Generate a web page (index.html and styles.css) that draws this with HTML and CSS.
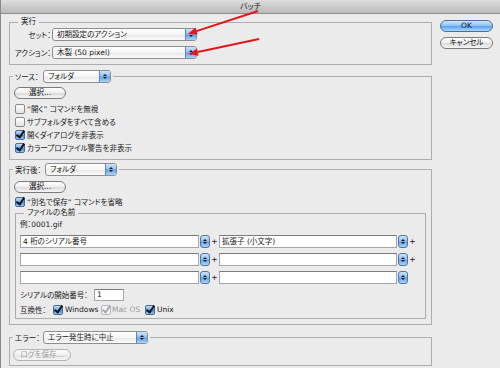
FILE: index.html
```html
<!DOCTYPE html>
<html lang="ja">
<head>
    <meta charset="UTF-8">
    <meta name="viewport" content="width=device-width, initial-scale=1.0">
    <title>バッチ</title>
    <link rel="stylesheet" href="styles.css">
</head>
<body>
    <div class="window">
        <div class="titlebar">バッチ</div>
        <div class="content">
            <div class="main">
                <fieldset class="group group-run">
                    <legend class="group-title">実行</legend>
                    <div class="run-rows">
                        <div class="form-row">
                            <span class="row-label">セット：</span>
                            <div class="popup popup-set"><span class="popup-text">初期設定のアクション</span><span class="popup-arrow"></span></div>
                        </div>
                        <div class="form-row">
                            <span class="row-label">アクション：</span>
                            <div class="popup popup-set"><span class="popup-text">木製 (50 pixel)</span><span class="popup-arrow"></span></div>
                        </div>
                    </div>
                </fieldset>

                <fieldset class="group group-source">
                    <legend class="group-head">
                        <span class="head-label">ソース：</span>
                        <div class="popup popup-source"><span class="popup-text">フォルダ</span><span class="popup-arrow"></span></div>
                    </legend>
                    <button class="aqua-btn choose-btn">選択...</button>
                    <div class="check-list">
                        <label class="check"><span class="box"></span>“開く” コマンドを無視</label>
                        <label class="check"><span class="box"></span>サブフォルダをすべて含める</label>
                        <label class="check"><span class="box on"></span>開くダイアログを非表示</label>
                        <label class="check"><span class="box on"></span>カラープロファイル警告を非表示</label>
                    </div>
                </fieldset>

                <fieldset class="group group-dest">
                    <legend class="group-head">
                        <span class="head-label label-dest">実行後：</span>
                        <div class="popup popup-dest"><span class="popup-text">フォルダ</span><span class="popup-arrow"></span></div>
                    </legend>
                    <button class="aqua-btn choose-btn">選択...</button>
                    <div class="check-list check-saveas">
                        <label class="check"><span class="box on"></span>“別名で保存” コマンドを省略</label>
                    </div>

                    <fieldset class="group group-name">
                        <legend class="group-title">ファイルの名前</legend>
                        <div class="example">例：0001.gif</div>
                        <div class="combo-rows">
                            <div class="combo-row">
                                <div class="field field-a">4 桁のシリアル番号</div><span class="combo-btn"></span><span class="plus">+</span>
                                <div class="field field-b">拡張子 (小文字)</div><span class="combo-btn"></span><span class="plus">+</span>
                            </div>
                            <div class="combo-row">
                                <div class="field field-a"></div><span class="combo-btn"></span><span class="plus">+</span>
                                <div class="field field-b"></div><span class="combo-btn"></span><span class="plus">+</span>
                            </div>
                            <div class="combo-row">
                                <div class="field field-a"></div><span class="combo-btn"></span><span class="plus">+</span>
                                <div class="field field-b"></div><span class="combo-btn"></span>
                            </div>
                        </div>
                        <div class="serial-row">
                            <span class="serial-label">シリアルの開始番号：</span>
                            <div class="field field-serial">1</div>
                        </div>
                        <div class="compat-row">
                            <span class="compat-label">互換性：</span>
                            <label class="check check-win"><span class="box on"></span>Windows</label>
                            <label class="check check-mac check-dim"><span class="box dim"></span>Mac OS</label>
                            <label class="check"><span class="box on"></span>Unix</label>
                        </div>
                    </fieldset>
                </fieldset>

                <fieldset class="group group-error">
                    <legend class="group-head">
                        <span class="head-label">エラー：</span>
                        <div class="popup popup-error"><span class="popup-text">エラー発生時に中止</span><span class="popup-arrow"></span></div>
                    </legend>
                    <button class="aqua-btn log-btn" disabled>ログを保存...</button>
                </fieldset>
            </div>

            <div class="side">
                <button class="aqua-btn default-btn">OK</button>
                <button class="aqua-btn">キャンセル</button>
            </div>
        </div>
    </div>

    <svg class="annotations" width="500" height="372" viewBox="0 0 500 372">
        <line x1="258" y1="11" x2="196.5" y2="31.1" stroke="#e4161b" stroke-width="2"/>
        <polygon points="188,34 197.6,34.6 195.4,27.6" fill="#e4161b"/>
        <line x1="259" y1="39" x2="197.8" y2="52.1" stroke="#e4161b" stroke-width="2"/>
        <polygon points="189,54 198.6,55.7 197,48.5" fill="#e4161b"/>
    </svg>
</body>
</html>
```

FILE: styles.css
```css
body {
    margin: 0;
    background: #ffffff;
    font-family: "DejaVu Sans", "Noto Sans CJK JP", sans-serif;
    font-size: 7.5px;
    font-feature-settings: "palt";
    color: #1a1a1a;
    position: relative;
}
.window {
    width: 500px;
    height: 368px;
    box-sizing: border-box;
    background: #ebebeb;
    border-left: 1px solid #8a8a8a;
    box-shadow: 0 2px 3px rgba(0,0,0,0.45);
}
.titlebar {
    height: 13px;
    line-height: 13px;
    text-align: center;
    font-size: 8px;
    color: #222;
    background: linear-gradient(#dedede, #bababa);
    border-bottom: 1px solid #8c8c8c;
}
.content {
    display: flex;
    gap: 8px;
    padding: 3px 0 0 8px;
}
.main {
    width: 423px;
}
.side {
    width: 53px;
    display: flex;
    flex-direction: column;
    gap: 5px;
    padding-top: 3px;
}

/* group boxes */
.group {
    margin: 0;
    padding: 0 0 5px;
    border: 1px solid #adadad;
    min-inline-size: 0;
}
.group-title {
    margin-left: 8px;
    padding: 0 3px;
    height: 10px;
    line-height: 10px;
}
.group-head {
    display: flex;
    align-items: center;
    height: 13px;
    margin-left: 3px;
    padding: 0 2px;
}
.head-label {
    width: 28px;
    white-space: nowrap;
}
.label-dest {
    width: 30px;
}
.group-source {
    margin-top: 5px;
}
.group-dest {
    margin-top: 3px;
}
.group-error {
    margin-top: 6px;
    padding-bottom: 4px;
}

/* run group */
.run-rows {
    display: flex;
    flex-direction: column;
    gap: 5px;
    padding-top: 1px;
}
.form-row {
    display: flex;
    align-items: center;
    height: 13px;
}
.row-label {
    width: 42px;
    box-sizing: border-box;
    padding-right: 1px;
    text-align: right;
    white-space: nowrap;
}

/* popup menus */
.popup {
    display: flex;
    height: 13px;
    box-sizing: border-box;
    border: 1px solid #8e8e8e;
    border-radius: 3px;
    background: linear-gradient(#ffffff, #f4f4f4 50%, #e8e8e8 51%, #fbfbfb);
}
.popup-text {
    flex: 1;
    padding-left: 4px;
    line-height: 11px;
    white-space: nowrap;
}
.popup-arrow,
.combo-btn {
    display: flex;
    flex-direction: column;
    align-items: center;
    justify-content: center;
    gap: 1px;
    background: linear-gradient(#cde3fb, #8ec0f3 48%, #5c9fe9 52%, #a9d4fb);
}
.popup-arrow {
    width: 10px;
    border-left: 1px solid #5f86b8;
    border-radius: 0 2px 2px 0;
}
.popup-arrow::before,
.combo-btn::before {
    content: "";
    border-left: 2px solid transparent;
    border-right: 2px solid transparent;
    border-bottom: 2px solid #1c1c1c;
}
.popup-arrow::after,
.combo-btn::after {
    content: "";
    border-left: 2px solid transparent;
    border-right: 2px solid transparent;
    border-top: 2px solid #1c1c1c;
}
.popup-set {
    width: 145px;
}
.popup-source {
    width: 68px;
}
.popup-dest {
    width: 72px;
}
.popup-error {
    width: 105px;
}

/* buttons */
.aqua-btn {
    height: 12px;
    padding: 0;
    font: inherit;
    line-height: 10px;
    color: #111;
    border: 1px solid #7b7b7b;
    border-radius: 7px;
    background: linear-gradient(#ffffff, #f0f0f0 45%, #dcdcdc 55%, #f6f6f6);
}
.default-btn {
    border-color: #4a6f9f;
    background: linear-gradient(#d2e6fc, #91c2f5 45%, #5fa3ee 55%, #acd7fd);
}
.choose-btn {
    display: block;
    width: 52px;
    margin: 4px 0 0 4px;
}
.group-dest > .choose-btn {
    margin-top: 5px;
}
.log-btn {
    display: block;
    width: 58px;
    margin: 5px 0 0 3px;
    color: #9a9a9a;
    border-color: #b2b2b2;
    background: linear-gradient(#fbfbfb, #f0f0f0 50%, #e6e6e6 51%, #f3f3f3);
}

/* checkboxes */
.check-list {
    margin-top: 3px;
    padding-left: 5px;
}
.check-saveas {
    margin-top: 2px;
}
.check {
    display: flex;
    align-items: center;
    gap: 2px;
    height: 13px;
    white-space: nowrap;
}
.box {
    position: relative;
    flex: none;
    width: 10px;
    height: 10px;
    box-sizing: border-box;
    border: 1px solid #8a8a8a;
    border-radius: 2px;
    background: linear-gradient(#ffffff, #e2e2e2);
}
.box.on {
    border-color: #476b9c;
    background: linear-gradient(#c0dbf8, #6ea9ec 50%, #3e88de 51%, #8fc4f6);
}
.box.on::after,
.box.dim::after {
    content: "";
    position: absolute;
    left: 2px;
    top: -2px;
    width: 3px;
    height: 7px;
    border: solid #111;
    border-width: 0 2px 2px 0;
    transform: rotate(35deg);
}
.box.dim {
    border-color: #b8b8b8;
    background: #f2f2f2;
}
.box.dim::after {
    border-color: #a8a8a8;
}
.check-dim {
    color: #9a9a9a;
}

/* file name group */
.group-name {
    margin: 0 5px;
    padding-bottom: 2px;
}
.group-dest {
    padding-bottom: 5px;
}
.example {
    height: 10px;
    line-height: 10px;
    margin-top: 2px;
    padding-left: 4px;
}
.combo-rows {
    display: flex;
    flex-direction: column;
    gap: 5px;
    margin-top: 5px;
}
.combo-row {
    display: flex;
    align-items: center;
    height: 13px;
    padding-left: 4px;
}
.field {
    height: 13px;
    box-sizing: border-box;
    border: 1px solid #a6a6a6;
    border-top-color: #7a7a7a;
    background: #ffffff;
    padding-left: 2px;
    line-height: 11px;
    white-space: nowrap;
}
.field-a {
    width: 179px;
}
.field-b {
    width: 178px;
}
.combo-btn {
    width: 10px;
    height: 13px;
    margin-left: 1px;
    box-sizing: border-box;
    border: 1px solid #55779f;
    border-radius: 3px;
}
.plus {
    width: 9px;
    text-align: center;
}
.serial-row {
    display: flex;
    align-items: center;
    height: 13px;
    margin-top: 4px;
    padding-left: 4px;
}
.serial-label {
    width: 74px;
    white-space: nowrap;
}
.field-serial {
    width: 30px;
    height: 12px;
    line-height: 10px;
}
.compat-row {
    display: flex;
    align-items: center;
    height: 13px;
    margin-top: 2px;
    padding-left: 4px;
}
.compat-label {
    width: 33px;
    white-space: nowrap;
}
.check-win {
    flex: none;
    width: 48px;
}
.check-mac {
    flex: none;
    width: 44px;
    gap: 1px;
}

.annotations {
    position: absolute;
    top: 0;
    left: 0;
    pointer-events: none;
}
```
